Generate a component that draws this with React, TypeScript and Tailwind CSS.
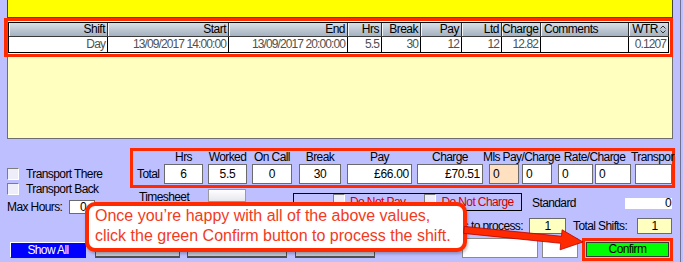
import React from 'react';

const cols = [
  { h: 'Shift', v: 'Day', w: 'w-[99px]' },
  { h: 'Start', v: '13/09/2017 14:00:00', w: 'w-[121px]' },
  { h: 'End', v: '13/09/2017 20:00:00', w: 'w-[119px]' },
  { h: 'Hrs', v: '5.5', w: 'w-[34px]' },
  { h: 'Break', v: '30', w: 'w-[39px]' },
  { h: 'Pay', v: '12', w: 'w-[41px]' },
  { h: 'Ltd', v: '12', w: 'w-[40px]' },
  { h: 'Charge', v: '12.82', w: 'w-[39px]' },
  { h: 'Comments', v: '', w: 'w-[88px]', left: true },
  { h: 'WTR', v: '0.1207', w: 'w-[40px]', sort: true },
];

const Check = () => (
  <span className="inline-block w-[12px] h-[12px] shrink-0 border border-t-[#7d7d7d] border-l-[#7d7d7d] border-b-white border-r-white bg-[#EEEEFA]" />
);

const Field = ({ className, children }: { className: string; children?: React.ReactNode }) => (
  <div className={'h-[20px] flex items-center border border-[#6b6b6b] bg-white text-[12px] tracking-[-0.3px] ' + className}>{children}</div>
);

const App: React.FC = () => {
  return (
    <div className="relative w-[683px] h-[262px] overflow-hidden bg-[#BEBFFF] text-[12px] text-black tracking-[-0.6px] font-['Liberation_Sans',Arial,sans-serif]">
      <div className="w-[681px] h-full border-r border-[#707090]">
        {/* top panels */}
        <div className="ml-[7px] w-[666px]">
          <div className="h-[18px] bg-[#FFFF00] border-x border-b border-[#454545]" />
          <div className="h-[121px] bg-[#FFFFC0] border-x border-b border-[#6e6e6e] pt-[4px]">
            <div className="w-[661px] border-l border-t border-b border-black outline-[3px] outline-[#FF2A00] outline-offset-[1px]">
              <div className="flex h-[14px] bg-gradient-to-b from-[#D8DFE8] to-[#A5B1C0] border-b border-[#3a3a3a]">
                {cols.map((c, i) => (
                  <div
                    key={i}
                    className={`${c.w} relative h-full border-r border-[#303030] shadow-[inset_1px_0_0_#f4f6f8] leading-[13px] tracking-[-0.5px] ${c.left ? 'text-left pl-[3px]' : 'text-right pr-[2px]'}`}
                  >
                    {c.h}
                    {c.sort && (
                      <svg className="absolute right-[2px] top-[2px]" width="6" height="9" viewBox="0 0 6 9">
                        <path d="M0.5 3.5 L3 1 L5.5 3.5 M0.5 5.5 L3 8 L5.5 5.5" stroke="#333" fill="none" strokeWidth="1" />
                      </svg>
                    )}
                    {c.sort && <span className="inline-block w-[8px]" />}
                  </div>
                ))}
              </div>
              <div className="flex h-[15px] bg-white text-[#505050]">
                {cols.map((c, i) => (
                  <div key={i} className={`${c.w} h-full border-r border-black leading-[15px] text-right pr-[2px] tracking-[-0.9px]`}>
                    {c.v}
                  </div>
                ))}
              </div>
            </div>
          </div>
        </div>

        {/* lower form */}
        <div className="flex h-[99px]">
          <div className="w-[130px] pt-[27px]">
            <div className="flex items-center h-[15px] pl-[7px]">
              <Check />
              <span className="ml-[7px]">Transport There</span>
            </div>
            <div className="flex items-center h-[15px] pl-[7px]">
              <Check />
              <span className="ml-[7px]">Transport Back</span>
            </div>
            <div className="flex items-center h-[14px] pl-[7px] mt-[4px]">
              <span className="w-[62px]">Max Hours:</span>
              <div className="w-[26px] h-[14px] bg-white border border-[#6b6b6b] pl-[10px] leading-[12px]">0</div>
            </div>
          </div>

          <div className="w-[545px]">
            <div className="mt-[9px] h-[40px] border-[3px] border-[#FF2A00] flex">
              <div className="w-[31px] flex flex-col">
                <div className="h-[13px]" />
                <div className="h-[20px] flex items-center pl-[4px]">Total</div>
              </div>
              {[
                { l: 'Hrs', v: '6', w: 'w-[39px]', ml: 'ml-0' },
                { l: 'Worked', v: '5.5', w: 'w-[39px]', ml: 'ml-[5px]' },
                { l: 'On Call', v: '0', w: 'w-[40px]', ml: 'ml-[5px]' },
                { l: 'Break', v: '30', w: 'w-[42px]', ml: 'ml-[7px]' },
              ].map((c) => (
                <div key={c.l} className={`${c.w} ${c.ml} flex flex-col`}>
                  <div className="h-[13px] leading-[12px] text-center whitespace-nowrap">{c.l}</div>
                  <Field className="justify-center">{c.v}</Field>
                </div>
              ))}
              {[
                { l: 'Pay', v: '£66.00', w: 'w-[65px]', ml: 'ml-[6px]' },
                { l: 'Charge', v: '£70.51', w: 'w-[66px]', ml: 'ml-[5px]' },
              ].map((c) => (
                <div key={c.l} className={`${c.w} ${c.ml} flex flex-col`}>
                  <div className="h-[13px] leading-[12px] text-center">{c.l}</div>
                  <Field className="justify-end pr-[2px]">{c.v}</Field>
                </div>
              ))}
              <div className="w-[63px] ml-[6px] flex flex-col">
                <div className="h-[13px] leading-[12px] text-center whitespace-nowrap -mx-[6px]">Mls Pay/Charge</div>
                <div className="flex gap-[3px]">
                  <Field className="w-[30px] pl-[3px] !bg-[#FFE0C0]">0</Field>
                  <Field className="w-[30px] pl-[3px]">0</Field>
                </div>
              </div>
              <div className="w-[73px] ml-[6px] flex flex-col">
                <div className="h-[13px] leading-[12px] text-center whitespace-nowrap">Rate/Charge</div>
                <div className="flex gap-[2px]">
                  <Field className="w-[35px] pl-[3px]">0</Field>
                  <Field className="w-[36px] pl-[3px]">0</Field>
                </div>
              </div>
              <div className="w-[37px] ml-[4px] flex flex-col">
                <div className="h-[13px] leading-[12px] whitespace-nowrap -ml-[4px]">Transpor</div>
                <Field className="w-[37px]" />
              </div>
            </div>

            <div className="flex h-[26px]">
              <div className="ml-[9px] w-[69px] mt-[3px] leading-[12px]">Timesheet</div>
              <div className="w-[38px] h-[13px] mt-[1px] bg-gradient-to-b from-white to-[#E6E6EE] border border-[#9a9a9a]" />
              <div className="ml-[47px] mt-[5px] w-[229px] h-[18px] border border-black flex items-center text-[#D00000]">
                <span className="ml-[39px]"><Check /></span>
                <span className="ml-[5px]">Do Not Pay</span>
                <span className="ml-[19px]"><Check /></span>
                <span className="ml-[5px]">Do Not Charge</span>
              </div>
              <div className="ml-[10px] w-[93px] mt-[9px] leading-[13px]">Standard</div>
              <div className="w-[47px] h-[11px] mt-[10px] bg-white text-right pr-[1px] leading-[11px]">0</div>
            </div>

            <div className="flex items-center h-[24px]">
              <div className="w-[393px] text-right">Shifts to process:</div>
              <div className="ml-[6px] w-[37px] h-[16px] bg-[#FFFFC0] border border-[#6b6b6b] text-center leading-[14px]">1</div>
              <div className="ml-[7px] w-[64px]">Total Shifts:</div>
              <div className="w-[35px] h-[16px] bg-[#FFFFC0] border border-[#6b6b6b] text-center leading-[14px]">1</div>
            </div>
          </div>
        </div>

        {/* buttons */}
        <div className="flex h-[25px] items-start">
          <div className="ml-[10px] mt-[4px] w-[76px] h-[16px] bg-[#0000FF] text-white text-center leading-[14px] border border-t-white border-l-white border-b-[#202020] border-r-[#202020]">
            Show All
          </div>
          <div className="ml-[9px] mt-[3px] w-[85px] h-[17px] bg-[#C8C8D8] border border-b-2 border-[#505050]" />
          <div className="ml-[7px] mt-[3px] w-[100px] h-[17px] bg-[#C8C8D8] border border-b-2 border-[#505050]" />
          <div className="ml-[8px] mt-[3px] w-[80px] h-[17px] bg-[#C8C8D8] border border-b-2 border-[#505050]" />
          <div className="ml-[87px] w-[76px] h-[20px] bg-white border border-[#8a8a8a]" />
          <div className="ml-[4px] w-[36px] h-[20px] bg-white border border-[#8a8a8a]" />
          <div className="ml-[4px] w-[91px] h-[23px] border-[3px] border-[#FF2A00] p-[1px]">
            <div className="h-full bg-[#00FF00] border border-[#3a3a3a] text-center leading-[13px]">Confirm</div>
          </div>
        </div>
      </div>

      {/* annotation callout */}
      <div className="absolute left-[85px] top-[202px] w-[382px] h-[50px] border-4 border-[#FF2A00] rounded-[10px] bg-white pl-[6px] text-[16px] leading-[20px] tracking-normal text-[#F23A22] shadow-[1px_2px_3px_rgba(0,0,0,0.25)]">
        <div>Once you’re happy with all of the above values,</div>
        <div>click the green Confirm button to process the shift.</div>
      </div>
      <svg className="absolute left-0 top-0 pointer-events-none" width="683" height="262" viewBox="0 0 683 262">
        <polygon
          points="464.4,226.4 561.5,236.3 562.1,229.8 583,242 560.1,249.8 560.7,243.3 463.6,233.4"
          fill="#FF2A00"
          stroke="#B80000"
          strokeWidth="0.8"
        />
      </svg>
    </div>
  );
};

export default App;
